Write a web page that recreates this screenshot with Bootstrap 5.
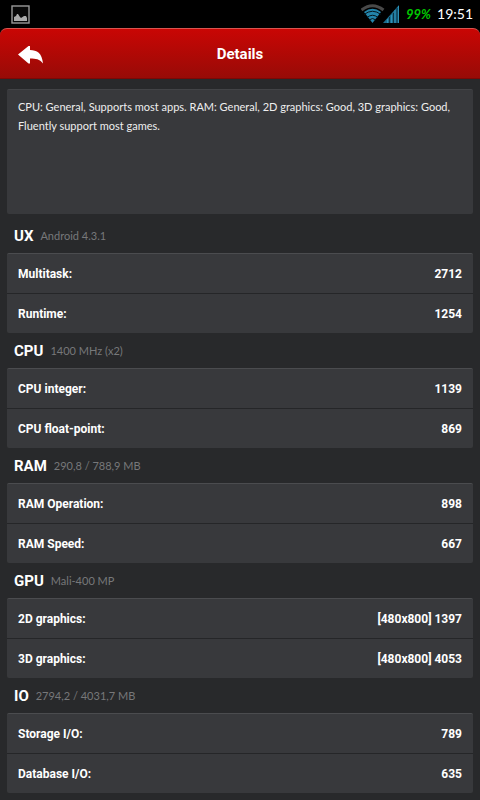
<!DOCTYPE html>
<html lang="en">
<head>
<meta charset="utf-8">
<meta name="viewport" content="width=device-width, initial-scale=1">
<title>Details</title>
<link href="https://cdn.jsdelivr.net/npm/bootstrap@5.3.0/dist/css/bootstrap.min.css" rel="stylesheet">
<style>
body { background: #28292b; color: #fff; font-family: Roboto, "Liberation Sans", sans-serif; font-size: 12px; line-height: 18px; }
.status { height: 28px; padding: 0 7px; background: #000; font-family: Lato, sans-serif; }
.indicators { gap: 6px; }
.status .battery { color: #00c800; font-size: 13px; font-style: italic; font-weight: 700; }
.status .clock { font-size: 14px; }
.title-wrap { background: linear-gradient(#000, #28292b); }
.title-bar { height: 51px; border-radius: 7px 7px 0 0; border-top: 1px solid #d9544f; background: linear-gradient(#c90604, #970b07); box-shadow: inset 0 -1px #7e0805; display: grid; grid-template-columns: 62px 1fr 62px; }
.title-bar h1 { font-size: 15px; line-height: 20px; }
.page { padding: 10px 7px 7px; }
.panel { background: #38393c; border-top: 1px solid #424346; border-radius: 2px; }
.summary { min-height: 125px; padding: 7px 11px; font-family: Lato, sans-serif; font-size: 11px; line-height: 19px; color: #eee; }
.heading { height: 35px; padding: 0 7px; gap: 7px; }
.heading h2 { font-size: 15px; line-height: 20px; }
.heading span { font-family: Lato, sans-serif; font-size: 11px; color: #77787a; }
.scores { font-weight: 700; border-top: 1px solid #4b4c4f; }
.scores > div { height: 39px; padding: 0 11px; }
.scores > div:first-child { height: 40px; border-bottom: 1px solid #252628; }
</style>
<script src="https://cdn.jsdelivr.net/npm/bootstrap@5.3.0/dist/js/bootstrap.bundle.min.js"></script>
</head>
<body>
<div class="status d-flex align-items-center justify-content-between">
  <svg width="26" height="28" viewBox="7 0 26 28" aria-hidden="true"><rect x="12" y="6" width="17" height="17" fill="#080808" stroke="#999" stroke-width="1.4"/><path d="M14 21v-4l2-1 1-2h1l2 3 1 1 3-2h2l1 2v3z" fill="#aaa"/></svg>
  <div class="indicators d-flex align-items-center">
    <svg width="39" height="28" viewBox="361 0 39 28" aria-hidden="true">
      <path d="M361.500 10Q372.500 1.500 383.500 10" fill="none" stroke="#494949" stroke-width="3"/>
      <path d="M364 12Q372.500 5.500 381 12L372.500 23z" fill="#2385ab"/>
      <path d="M364 14.500Q372.500 8 381 14.500M367 17.500Q372.500 13 378 17.500M369 20Q372.500 17 376 20" fill="none" stroke="#06151c" stroke-width="1"/>
      <path d="M383 23L399 5V23z" fill="#1b6d8e"/>
      <path d="M387.500 23v-4M391.500 23v-8M395 23V10M398.500 23V6" stroke="#2c91b7"/>
      <path d="M389.500 23v-6M393.500 23v-10M397 23V8" stroke="#0a3143"/>
    </svg>
    <span class="battery">99%</span>
    <span class="clock">19:51</span>
  </div>
</div>
<header class="title-wrap">
  <div class="title-bar align-items-center">
    <button class="btn border-0 p-0 h-100" type="button" aria-label="Back"><svg width="26" height="20" viewBox="18 44 26 20" aria-hidden="true"><path d="M18 53.500L28.500 45H30V49C37 49 42 52 43 62.500C39.500 58 36 57.500 30 57.500V62.500H28.500z" fill="#fff"/></svg></button>
    <h1 class="text-center fw-bold m-0">Details</h1>
  </div>
</header>
<main class="page">
  <p class="panel summary mb-1">CPU: General, Supports most apps. RAM: General, 2D graphics: Good, 3D graphics: Good, Fluently support most games.</p>
  <section><div class="heading d-flex align-items-center"><h2 class="fw-bold m-0">UX</h2><span>Android 4.3.1</span></div>
    <div class="panel scores"><div class="d-flex align-items-center justify-content-between"><span>Multitask:</span><span>2712</span></div><div class="d-flex align-items-center justify-content-between"><span>Runtime:</span><span>1254</span></div></div></section>
  <section><div class="heading d-flex align-items-center"><h2 class="fw-bold m-0">CPU</h2><span>1400 MHz (x2)</span></div>
    <div class="panel scores"><div class="d-flex align-items-center justify-content-between"><span>CPU integer:</span><span>1139</span></div><div class="d-flex align-items-center justify-content-between"><span>CPU float-point:</span><span>869</span></div></div></section>
  <section><div class="heading d-flex align-items-center"><h2 class="fw-bold m-0">RAM</h2><span>290,8 / 788,9 MB</span></div>
    <div class="panel scores"><div class="d-flex align-items-center justify-content-between"><span>RAM Operation:</span><span>898</span></div><div class="d-flex align-items-center justify-content-between"><span>RAM Speed:</span><span>667</span></div></div></section>
  <section><div class="heading d-flex align-items-center"><h2 class="fw-bold m-0">GPU</h2><span>Mali-400 MP</span></div>
    <div class="panel scores"><div class="d-flex align-items-center justify-content-between"><span>2D graphics:</span><span>[480x800] 1397</span></div><div class="d-flex align-items-center justify-content-between"><span>3D graphics:</span><span>[480x800] 4053</span></div></div></section>
  <section><div class="heading d-flex align-items-center"><h2 class="fw-bold m-0">IO</h2><span>2794,2 / 4031,7 MB</span></div>
    <div class="panel scores"><div class="d-flex align-items-center justify-content-between"><span>Storage I/O:</span><span>789</span></div><div class="d-flex align-items-center justify-content-between"><span>Database I/O:</span><span>635</span></div></div></section>
</main>
</body>
</html>
